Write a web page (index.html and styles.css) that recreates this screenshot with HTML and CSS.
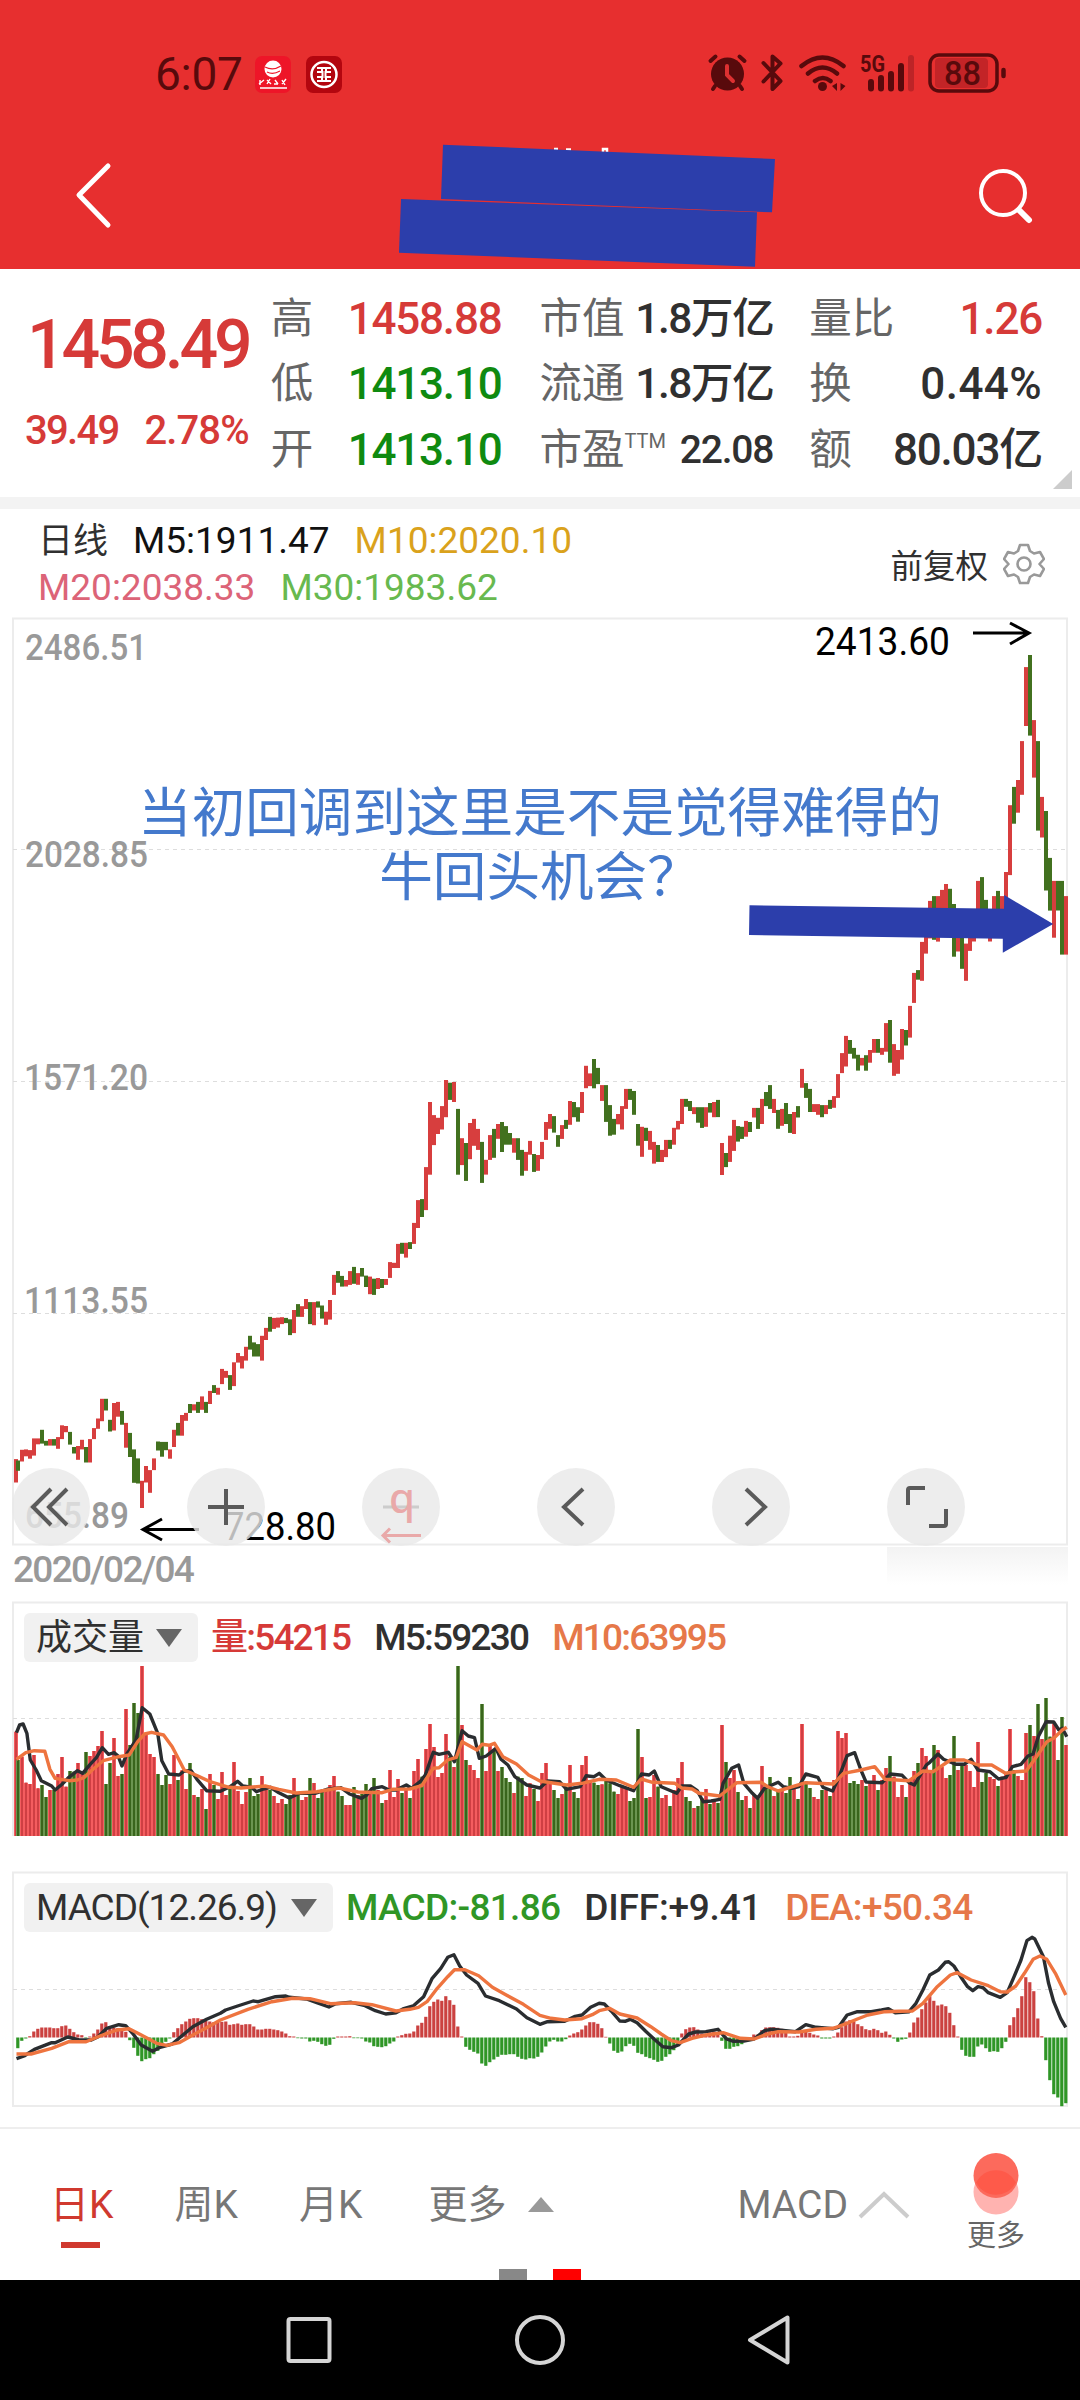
FILE: index.html
```html
<!DOCTYPE html>
<html lang="zh-CN">
<head>
    <meta charset="UTF-8">
    <meta name="viewport" content="width=device-width, initial-scale=1.0">
    <title>日K</title>
    <link rel="stylesheet" href="styles.css">
</head>
<body>
    <header class="header">
        <div class="status-bar">
            <div class="status-left">
                <span class="clock">6:07</span>
                <svg class="app-icon" width="36" height="37" viewBox="0 0 36 37">
                    <rect width="36" height="37" rx="7" fill="#ee1528"/>
                    <circle cx="18" cy="13" r="8.5" fill="#fff"/>
                    <path d="M10 11q8 4 16-1M12 16q6 3 13-1" stroke="#ee1528" stroke-width="1.2" fill="none"/>
                    <path d="M4 28l5-4M5 24v5M12 24l4 4M15 23l-3 5M20 24l3 4M19 28h4M27 24l3 5M31 23l-4 5M5 32h27" stroke="#fff" stroke-width="1.4" fill="none"/>
                </svg>
                <svg class="app-icon" width="36" height="37" viewBox="0 0 36 37">
                    <rect width="36" height="37" rx="7" fill="#b3060f"/>
                    <circle cx="18" cy="18.500" r="12.500" fill="none" stroke="#fff" stroke-width="2.500"/>
                    <path d="M11 12h14M11 25h14M11 16h5.500v5H11M25 16h-5.500v5H25M16 12v4M20 12v4M16 21v4M20 21v4" fill="none" stroke="#fff" stroke-width="2"/>
                </svg>
            </div>
            <svg class="status-right" width="310" height="44" viewBox="700 50 310 44">
                <g fill="#580a0c" stroke="#580a0c" stroke-linecap="round">
                    <circle cx="727.500" cy="74" r="16.500" stroke="none"/>
                    <path d="M710.500 61l5-4.500M744.500 61l-5-4.500M715 86l-2 3M740 86l2 3" stroke-width="4"/>
                    <path d="M727 66v9l6 6" stroke="#dd3031" stroke-width="4" fill="none"/>
                    <path d="M763.500 63l17 18-8 8V56.500l8 7-17 18" stroke-width="4" stroke-linejoin="round" fill="none"/>
                    <path d="M801.500 66q21-17 42 0M808 73.500q14.500-12 29 0M815 81q8-6 15.500 0" stroke-width="4.500" fill="none"/>
                    <circle cx="822.500" cy="86.500" r="4.500" stroke="none"/>
                    <path d="M837 83v8l-5-5zM840.500 83v8l5-5z" stroke="none"/>
                    <path d="M871 82v6.500M881 78v10.500M891 74v14.500M901 66v22.500" stroke-width="6"/>
                    <path d="M911 58v30.500" stroke-width="6" stroke="#bd2427"/>
                    <rect x="930" y="55" width="67" height="36" rx="9" fill="none" stroke-width="3.500"/>
                    <rect x="935" y="58" width="53" height="30" rx="4" fill="#c32427" stroke="none"/>
                    <path d="M1003.500 70v6" stroke-width="4.500"/>
                </g>
                <text class="network" x="860" y="72" textLength="25" lengthAdjust="spacingAndGlyphs">5G</text>
                <text class="battery" x="944" y="84.500" textLength="37" lengthAdjust="spacingAndGlyphs">88</text>
            </svg>
        </div>
        <div class="title-bar">
            <svg width="40" height="70" viewBox="0 0 40 70">
                <path d="M35 6L6 35l29 30" fill="none" stroke="#fff" stroke-width="5" stroke-linecap="round" stroke-linejoin="round"/>
            </svg>
            <svg width="60" height="60" viewBox="0 0 60 60">
                <circle cx="27" cy="28" r="22" fill="none" stroke="#fff" stroke-width="4"/>
                <path d="M43 45l10 10" stroke="#fff" stroke-width="6" stroke-linecap="round"/>
            </svg>
        </div>
        <svg class="title-cover" width="380" height="126" viewBox="397 142 380 126">
            <path d="M554 149h4M566 149.500h5M603 152v-3h4v3" stroke="#fff" stroke-width="2.500" fill="none"/>
            <path d="M443 144.700l332 14.300-3 53.300-331-13.300z" fill="#2c3eab"/>
            <path d="M401 199l356 13.300-2 54.400-356-14z" fill="#2c3eab"/>
        </svg>
    </header>

    <section class="quote">
        <div class="quote-main up">
            <div class="price">1458.49</div>
            <div class="change"><span>39.49</span><span class="pct">2.78%</span></div>
        </div>
        <div class="quote-col">
            <div><label>高</label><b class="up">1458.88</b></div>
            <div><label>低</label><b class="down">1413.10</b></div>
            <div><label>开</label><b class="down">1413.10</b></div>
        </div>
        <div class="quote-col">
            <div><label>市值</label><b class="cap">1.8万亿</b></div>
            <div><label>流通</label><b class="cap">1.8万亿</b></div>
            <div><label>市盈<sup>TTM</sup></label><b class="small">22.08</b></div>
        </div>
        <div class="quote-col">
            <div><label>量比</label><b class="up">1.26</b></div>
            <div><label>换</label><b class="wide">0.44%</b></div>
            <div><label>额</label><b>80.03亿</b></div>
        </div>
        <i class="expand"></i>
    </section>

    <section class="chart-head">
        <div class="ma-list">
            <div><span class="day">日线</span><span class="m5">M5:1911.47</span><span class="m10">M10:2020.10</span></div>
            <div><span class="m20">M20:2038.33</span><span class="m30">M30:1983.62</span></div>
        </div>
        <div class="adjust">
            <span>前复权</span>
            <svg width="42" height="42" viewBox="0 0 42 42" fill="none" stroke="#999" stroke-width="2.600" stroke-linejoin="round">
                <path d="M17 2h8l2 6 4 2.500 6-1.500 4 7-4.500 5 4.500 5-4 7-6-1.500-4 2.500-2 6h-8l-2-6-4-2.500-6 1.500-4-7 4.500-5-4.500-5 4-7 6 1.500 4-2.500z"/>
                <circle cx="21" cy="21" r="6.500"/>
            </svg>
        </div>
    </section>

    <section class="price-panel">
        <svg width="1080" height="930" viewBox="0 617 1080 930">
            <rect class="frame" x="13" y="618.500" width="1054" height="926"/>
            <path class="grid" d="M13 849.500H1067M13 1081.500H1067M13 1313.500H1067"/>
            <g class="scale">
                <text x="25" y="660" textLength="122" lengthAdjust="spacingAndGlyphs">2486.51</text>
                <text x="25" y="867" textLength="123" lengthAdjust="spacingAndGlyphs">2028.85</text>
                <text x="24" y="1090" textLength="124" lengthAdjust="spacingAndGlyphs">1571.20</text>
                <text x="24" y="1313" textLength="124" lengthAdjust="spacingAndGlyphs">1113.55</text>
                <text x="25" y="1527.500" textLength="104" lengthAdjust="spacingAndGlyphs">655.89</text>
            </g>
            <g id="candles"></g>
            <g class="extreme">
                <text x="815" y="655" textLength="135" lengthAdjust="spacingAndGlyphs">2413.60</text>
                <path d="M973 633h56M1010 623l19 10-19 11"/>
                <text x="224" y="1540" textLength="112" lengthAdjust="spacingAndGlyphs">728.80</text>
                <path d="M199 1529.500h-56M162 1519l-19 10.500 19 10.500"/>
            </g>
        </svg>
        <p class="note">当初回调到这里是不是觉得难得的<br>牛回头机会？</p>
        <svg class="note-arrow" width="306" height="60" viewBox="748 894 306 60">
            <path d="M749.500 905.300l254.500 3.400.2-13.700 49 29-50.400 28.700v-14L749 935z" fill="#2c3eab"/>
        </svg>
        <div class="tools">
            <button><svg viewBox="-39 -39 78 78"><path d="M0-18l-18 18L0 18M16-18L-2 0l18 18"/></svg></button>
            <button><svg viewBox="-39 -39 78 78"><path d="M-18 0h36M0-18v36"/></svg></button>
            <button class="q-tool"><svg viewBox="-39 -39 78 78"><path class="faint" d="M-18 0h36"/><text x="-12" y="6">q</text><path d="M20 28.500h-38M-11 21.500l-7 7 7 7"/></svg></button>
            <button><svg viewBox="-39 -39 78 78"><path d="M7-18l-19 18L7 18"/></svg></button>
            <button><svg viewBox="-39 -39 78 78"><path d="M-5-18l19 18-19 18"/></svg></button>
            <button><svg viewBox="-39 -39 78 78"><path d="M-18-2v-15q0-2 2-2H-1M20 2v15q0 2-2 2H3"/></svg></button>
        </div>
    </section>
    <div class="date-row"><span>2020/02/04</span><i></i></div>

    <section class="sub-panel volume">
        <div class="legend">
            <span class="pill pill-cn">成交量<i></i></span>
            <span class="l-vol">量:54215</span>
            <span class="l-m5">M5:59230</span>
            <span class="l-m10">M10:63995</span>
        </div>
        <svg width="1080" height="236" viewBox="0 1601 1080 236">
            <path class="frame" d="M13 1836V1602.500H1067V1836"/>
            <path class="grid" d="M13 1718.500H1067"/>
            <g id="volume"></g>
            <polyline id="vol5" class="line dark"/>
            <polyline id="vol10" class="line orange"/>
        </svg>
    </section>

    <section class="sub-panel macd">
        <div class="legend">
            <span class="pill pill-en"><em>MACD(12.26.9)</em><i></i></span>
            <span class="l-macd">MACD:-81.86</span>
            <span class="l-diff">DIFF:+9.41</span>
            <span class="l-dea">DEA:+50.34</span>
        </div>
        <svg width="1080" height="236" viewBox="0 1871 1080 236">
            <rect class="frame" x="13" y="1872.500" width="1054" height="233.500"/>
            <path class="grid" d="M13 1989.500H1067"/>
            <g id="macd"></g>
            <polyline id="diff" class="line dark"/>
            <polyline id="dea" class="line orange"/>
        </svg>
    </section>

    <nav class="tabs">
        <a class="active">日K</a>
        <a>周K</a>
        <a>月K</a>
        <a class="more">更多<i></i></a>
        <a class="indicator">MACD<svg width="52" height="30" viewBox="0 0 52 30"><path d="M2 27L26 4l24 23" fill="none" stroke="#ccc" stroke-width="4"/></svg></a>
        <a class="more-dot">
            <svg width="46" height="62" viewBox="0 0 46 62">
                <circle cx="23" cy="39" r="22.500" fill="#ffb3b0"/>
                <circle cx="23" cy="22.500" r="22.500" fill="#fc6a5c"/>
                <path d="M3 29.500a22.500 22.500 0 0 1 40 0 22.500 22.500 0 0 1-40 0" fill="#fe5a4a"/>
            </svg>
            更多
        </a>
        <div class="pager"><i></i><i></i></div>
    </nav>

    <footer class="nav-bar">
        <svg width="1080" height="120" viewBox="0 2280 1080 120" fill="none" stroke="#d5d5d5" stroke-width="4" stroke-linejoin="round">
            <rect x="288.500" y="2319" width="41" height="42" rx="2"/>
            <circle cx="540" cy="2340" r="23"/>
            <path d="M750 2340l37.500-22.500v45z"/>
        </svg>
    </footer>

    <script src="chart.js"></script>
</body>
</html>
```
FILE: styles.css
```css
* {
    box-sizing: border-box;
}
body {
    margin: 0;
    width: 1080px;
    height: 2400px;
    overflow: hidden;
    background: #fff;
    color: #303030;
    font-family: Roboto, "Noto Sans CJK SC", sans-serif;
}
svg {
    display: block;
}
i {
    font-style: normal;
}
.up {
    color: #d63a38;
}
.down {
    color: #0f8a10;
}

/* header */
.header {
    position: relative;
    height: 269px;
    background: #e72f2f;
}
.status-bar {
    display: flex;
    justify-content: space-between;
    padding: 50px 70px 0 155px;
}
.status-left {
    display: flex;
    height: 48px;
    align-items: center;
}
.clock {
    width: 100px;
    font-size: 46px;
    letter-spacing: -0.3px;
    color: #580a0c;
}
.app-icon {
    margin-right: 15px;
}
.network {
    font-size: 23px;
    font-weight: 700;
    fill: #580a0c;
}
.battery {
    font-size: 34px;
    font-weight: 500;
    fill: #580a0c;
}
.title-bar {
    display: flex;
    justify-content: space-between;
    align-items: center;
    padding: 62px 44px 0 73px;
}
.title-cover {
    position: absolute;
    left: 397px;
    top: 142px;
}

/* quote */
.quote {
    position: relative;
    display: flex;
    height: 228px;
    padding: 17px 38px 0 25px;
}
.quote-main {
    width: 224px;
    margin-right: 22px;
    font-weight: 500;
}
.price {
    margin: 23px 0 0 2px;
    font-size: 68px;
    line-height: 72px;
    letter-spacing: -4.2px;
}
.change {
    display: flex;
    justify-content: space-between;
    margin-top: 28px;
    font-size: 40px;
    line-height: 44px;
    letter-spacing: -1.7px;
}
.pct {
    letter-spacing: -0.9px;
}
.quote-col {
    width: 231px;
    margin-right: 38px;
}
.quote-col + .quote-col {
    width: 234px;
    margin-right: 36px;
}
.quote-col + .quote-col + .quote-col {
    width: 233px;
    margin-right: 0;
}
.quote-col div {
    display: flex;
    justify-content: space-between;
    align-items: center;
    height: 65.5px;
    white-space: nowrap;
}
.quote-col label {
    font-size: 42.500px;
    line-height: 60px;
    color: #666;
}
.quote-col sup {
    font-size: 20px;
    line-height: 1;
    vertical-align: 16px;
}
.quote-col b {
    font-size: 44px;
    line-height: 60px;
    font-weight: 500;
    letter-spacing: -1.2px;
}
.quote-col .cap {
    font-size: 42.500px;
    letter-spacing: -1.4px;
}
.quote-col .small {
    font-size: 39px;
}
.quote-col .wide {
    letter-spacing: 0.4px;
}
.expand {
    position: absolute;
    right: 8px;
    bottom: 8px;
    border-left: 19px solid transparent;
    border-bottom: 19px solid #ccc;
}

/* moving averages */
.chart-head {
    display: flex;
    justify-content: space-between;
    height: 120px;
    padding: 9px 35px 0 38px;
    border-top: 12px solid #f3f3f3;
}
.ma-list {
    font-size: 37px;
    line-height: 45.500px;
    letter-spacing: 0;
}
.ma-list span {
    margin-right: 25px;
}
.day {
    font-size: 35px;
}
.m5 {
    color: #111;
}
.m10 {
    color: #daa21c;
}
.m20 {
    color: #dc6478;
}
.m30 {
    color: #68b94f;
}
.adjust {
    display: flex;
    align-items: center;
    height: 91px;
    font-size: 32.500px;
}
.adjust svg {
    margin-left: 15px;
}

/* price chart */
.frame {
    fill: none;
    stroke: #ececec;
    stroke-width: 2;
}
.grid {
    stroke: #ddd;
    stroke-width: 1;
    stroke-dasharray: 4 4;
}
.price-panel {
    position: relative;
    height: 930px;
}
.scale {
    font-size: 37px;
    font-weight: 500;
    fill: #999;
}
.extreme {
    font-size: 38.500px;
    fill: #000;
}
.extreme path {
    fill: none;
    stroke: #000;
    stroke-width: 3;
}
.r {
    fill: #d73e3e;
}
.g {
    fill: #42711f;
}
.note {
    position: absolute;
    top: 160px;
    left: 0;
    width: 1080px;
    margin: 0;
    text-align: center;
    font-family: "Noto Sans CJK SC", sans-serif;
    font-size: 53.600px;
    line-height: 64px;
    color: #4479cc;
}
.note-arrow {
    position: absolute;
    left: 748px;
    top: 277px;
}
.tools {
    position: absolute;
    left: 12px;
    top: 851px;
    display: flex;
    gap: 97px;
}
.tools button {
    width: 78px;
    height: 78px;
    padding: 0;
    border: none;
    border-radius: 50%;
    background: rgba(232, 232, 232, 0.8);
}
.tools path {
    fill: none;
    stroke: #5a5a5a;
    stroke-width: 4;
}
.tools .q-tool path {
    stroke: #e9a9a9;
    stroke-width: 3;
}
.tools .q-tool .faint {
    stroke: #ccc;
}
.tools text {
    font: 500 42px "Noto Sans", sans-serif;
    fill: #e9a9a9;
}
.date-row {
    display: flex;
    justify-content: space-between;
    height: 54px;
    padding: 0 12px 0 13px;
    font-size: 37px;
    line-height: 46px;
    font-weight: 500;
    letter-spacing: -1.7px;
    color: #999;
}
.date-row i {
    width: 181px;
    height: 38px;
    background: linear-gradient(#f3f3f3, #fff);
}

/* volume and macd */
.sub-panel {
    position: relative;
    height: 236px;
}
.macd {
    margin-top: 34px;
}
.line {
    fill: none;
    stroke-width: 3.4;
    stroke-linejoin: round;
}
.dark {
    stroke: #2a2d30;
}
.orange {
    stroke: #ee743f;
}
.legend {
    position: absolute;
    left: 24px;
    top: 12px;
    display: flex;
    align-items: center;
    font-size: 37px;
    line-height: 49px;
    font-weight: 500;
    white-space: nowrap;
    letter-spacing: -0.7px;
}
.volume .legend {
    letter-spacing: -1.8px;
}
.pill {
    display: flex;
    align-items: center;
    justify-content: space-between;
    height: 49px;
    padding: 0 16px 0 12px;
    border-radius: 6px;
    background: #f1f1f1;
    font-weight: 400;
}
.pill em {
    font-style: normal;
    letter-spacing: -1px;
}
.pill i {
    border: 13px solid transparent;
    border-top: 18px solid #666;
    border-bottom: none;
}
.pill-cn {
    width: 174px;
    font-size: 36px;
    line-height: 44px;
    letter-spacing: 0;
}
.pill-en {
    width: 309px;
}
.legend span + span {
    margin-left: 24px;
}
.legend .pill + span {
    margin-left: 13px;
}
.l-vol {
    line-height: 44px;
    color: #d63a38;
}
.l-m10,
.l-dea {
    color: #e67849;
}
.l-macd {
    color: #2f9626;
}
.l-diff {
    letter-spacing: -0.2px;
}
.vr {
    fill: #f45d5f;
}
.vr2 {
    fill: #cf3f43;
}
.vg {
    fill: #6b9550;
}
.vg2 {
    fill: #39651c;
}
.mr {
    fill: #cb4140;
}
.mg {
    fill: #2f9626;
}

/* bottom */
.tabs {
    position: relative;
    display: flex;
    height: 153px;
    margin-top: 20px;
    padding-left: 50px;
    border-top: 2px solid #eee;
    font-size: 39px;
    line-height: 152px;
    color: #777;
}
.tabs a {
    margin-right: 61px;
    white-space: nowrap;
}
.tabs .active {
    position: relative;
    color: #d0392f;
}
.active::after {
    content: "";
    position: absolute;
    left: 11px;
    bottom: 32px;
    width: 39px;
    height: 6px;
    background: #d0392f;
}
.tabs .more {
    display: flex;
    align-items: center;
    margin-left: 5px;
}
.more i {
    margin-left: 22px;
    border: 13.500px solid transparent;
    border-bottom: 15px solid #999;
    border-top: none;
}
.tabs .indicator {
    display: flex;
    align-items: center;
    margin-left: auto;
    margin-right: 57px;
}
.indicator svg {
    margin-left: 10px;
}
.tabs .more-dot {
    display: flex;
    flex-direction: column;
    align-items: center;
    margin-right: 55px;
    padding-top: 24px;
    font-size: 29px;
    line-height: 42px;
    color: #666;
}
.pager {
    position: absolute;
    left: 499px;
    bottom: 0;
    display: flex;
    gap: 26px;
}
.pager i {
    width: 28px;
    height: 11px;
    background: #888;
}
.pager i + i {
    background: #f00;
}
.nav-bar {
    height: 120px;
    background: #000;
}
```
FILE: chart.js
```js
// colour + top,bottom of each bar, measured from y = 1050
const candles = `r1188,1256 g1192,1222 r1161,1195 r1160,1180 r1162,1187 r1128,1178 r1128,1145 g1103,1143 g1135,1149 r1130,1149
g1130,1149 r1124,1158 r1090,1130 r1092,1110 g1109,1146 g1153,1172 r1150,1190 r1132,1160 g1153,1198 r1130,1198
r1098,1130 r1070,1100 r1013,1078 g1013,1047 g1074,1108 r1025,1105 r1022,1065 g1048,1088 r1083,1155 g1112,1182
g1160,1257 g1186,1259 r1251,1330 r1208,1256 r1220,1286 r1186,1220 g1137,1163 g1138,1181 g1138,1162 r1160,1187
r1103,1153 g1083,1120 r1060,1120 r1054,1077 g1028,1054 r1029,1047 g1022,1054 r1006,1045 g1022,1054 r990,1028
g973,996 r981,1001 r926,970 r932,952 g944,987 r907,976 r880,908 r889,925 r862,902 g830,870
g849,890 g854,890 r830,902 r807,842 g775,818 r778,810 r777,806 r776,796 g778,793 g782,828
r755,822 g738,775 r744,775 r723,752 g732,796 r732,799 g730,748 g742,780 r760,798 r726,783
r653,711 g642,676 g656,687 r668,687 r642,682 g630,679 r648,682 g633,658 g655,688 r658,709
g664,711 r662,694 g665,691 r665,682 r616,662 r618,633 r563,633 g560,592 r560,603 g558,578
r502,563 r436,517 g433,485 r340,465 r151,362 r189,276 r197,244 r163,231 r87,195 g95,145
r93,151 g171,362 r256,334 g270,380 r212,317 r200,278 r229,290 g267,386 r319,362 r247,319
g229,313 r215,258 g209,296 g221,275 g241,275 r256,298 g256,319 g290,365 r296,351 r264,304
g302,354 r305,351 r267,317 r209,261 r186,229 g192,240 g247,281 r218,258 g203,229 r148,217
g151,195 g166,208 r122,183 r46,111 r68,105 g26,111 g52,99 r102,148 g102,209 g160,249
g200,246 r186,216 r163,231 r113,171 g113,145 g119,188 g215,278 r223,310 g226,264 r235,290
r267,330 g276,325 r290,325 r261,311 g261,287 r226,275 r206,231 r142,215 g142,165 g148,177
r166,186 g166,211 g166,226 r166,223 g154,182 r151,195 g145,195 r270,363 g299,340 r249,325
r203,293 g221,266 g223,258 r206,252 g209,238 r168,196 g168,229 r142,215 g122,163 g102,171
r142,183 g174,229 r171,220 g154,215 g186,241 r180,244 g163,196 r55,110 g96,139 g113,180
r157,180 r157,188 g160,195 r160,186 g145,171 r134,168 r70,139 r9,67 r-41,48 g-29,11
g-6,25 g14,60 r23,45 g15,60 r0,37 r-32,8 g-32,8 r-6,14 r-78,5 g-87,37
r-17,75 r0,69 r-61,28 g-58,-13 r-128,-36 r-224,-137 g-232,-204 r-314,-201 r-339,-280 r-433,-324
g-447,-320 r-447,-315 r-465,-387 r-482,-407 g-468,-368 g-424,-271 r-358,-286 g-339,-236 r-309,-201 r-339,-288
r-387,-315 r-491,-358 g-502,-358 g-436,-339 r-397,-315 r-447,-358 g-462,-378 r-447,-368 r-517,-397 r-711,-508
g-764,-657 r-784,-689 r-897,-741 r-1112,-941 g-1147,-913 r-958,-791 g-897,-637 r-735,-617 g-694,-463 g-558,-405
r-491,-326 g-491,-405 g-491,-277 r-447,-277`.split(/\s+/);

// tops of the volume bars, same order as the candles
const volumes = [
    425, 510, 500, 578, 582, 495, 595, 585, 621, 600, 600, 552, 501, 590, 543, 545, 519, 548, 486, 498,
    483, 468, 423, 582, 519, 444, 558, 552, 357, 465, 339, 369, 228, 430, 492, 501, 552, 585, 555, 582,
    495, 570, 541, 597, 519, 615, 621, 597, 657, 552, 585, 627, 546, 615, 590, 516, 603, 642, 606, 564,
    618, 612, 558, 597, 600, 618, 639, 627, 642, 615, 564, 612, 630, 621, 564, 579, 624, 605, 597, 585,
    558, 605, 618, 645, 645, 591, 615, 612, 582, 600, 564, 600, 639, 630, 540, 621, 567, 609, 600, 624,
    543, 507, 560, 477, 402, 471, 561, 549, 432, 500, 531, 228, 405, 510, 525, 540, 564, 342, 543, 462,
    480, 543, 531, 564, 576, 609, 560, 564, 618, 580, 597, 633, 549, 519, 580, 600, 624, 612, 590, 525,
    606, 624, 525, 498, 570, 578, 585, 583, 570, 580, 605, 612, 590, 594, 633, 624, 417, 501, 624, 621,
    555, 590, 624, 615, 648, 600, 564, 516, 621, 633, 654, 648, 625, 597, 642, 630, 639, 405, 516, 564,
    540, 606, 630, 618, 654, 615, 625, 528, 590, 561, 618, 600, 598, 609, 561, 597, 627, 402, 575, 594,
    621, 627, 600, 600, 618, 570, 423, 444, 429, 579, 573, 582, 570, 588, 579, 555, 600, 570, 534, 498,
    560, 621, 585, 621, 570, 543, 519, 474, 498, 540, 465, 480, 530, 564, 555, 438, 540, 520, 525, 543,
    591, 456, 576, 549, 561, 567, 588, 560, 550, 417, 540, 558, 570, 429, 405, 438, 342, 447, 324, 440,
    400, 510, 381, 465
];

const macd = [
    -32, -10, -3, 4, 18, 26, 30, 30, 30, 28, 28, 34, 36, 26, 16, 9, 7, -2, 3, 12, 24, 42, 46, 34, 30, 28, 24, 17, -8, -31,
    -55, -71, -65, -62, -50, -40, -25, -13, -3, 16, 28, 40, 48, 56, 58, 58, 55, 50, 48, 46, 48, 47, 48, 38, 40, 42, 38, 40, 40, 33,
    24, 24, 26, 26, 24, 22, 18, 12, 4, 3, -2, -3, -3, -12, -10, -13, -20, -25, -22, -4, 3, 3, 3, 4, -2, -2, -3, -12, -15, -26,
    -28, -29, -26, -18, -12, 3, 7, 11, 12, 18, 36, 44, 62, 94, 107, 114, 110, 124, 112, 98, 33, 3, -28, -37, -43, -48, -78, -85, -74, -66,
    -58, -52, -52, -50, -50, -58, -64, -66, -62, -63, -58, -45, -27, -12, -7, -12, -12, -5, 6, 12, 16, 24, 36, 46, 46, 41, 28, 2, -18, -40,
    -46, -42, -26, -19, -25, -46, -50, -58, -62, -67, -73, -70, -58, -50, -38, -20, 12, 25, 30, 31, 24, 12, 10, 16, 18, 10, -10, -34, -34, -28,
    -26, -20, -8, -3, 9, 9, 22, 30, 31, 31, 29, 26, 15, 3, 3, 5, 15, 18, 14, 9, 6, -3, -3, -3, 3, 15, 31, 48, 52, 48,
    40, 34, 25, 22, 26, 22, 14, 18, 8, -3, -13, -6, -4, 15, 45, 60, 85, 105, 124, 110, 96, 99, 94, 74, 37, 3, -37, -55, -58, -58,
    -27, -21, -32, -43, -41, -43, -32, -13, 37, 61, 88, 124, 181, 166, 139, 57, 4, -68, -128, -170, -180, -206, -197
];

const lines = {
    vol5: '48,428 57,405 67,402 78,430 88,510 105,540 120,572 150,588 160,600 180,583 200,562 225,542 240,550 262,523 280,503 297,473 315,493 332,488 343,498 354,528 368,493 395,450 413,353 435,372 458,430 470,512 490,552 520,555 535,543 555,542 572,568 600,602 640,604 665,592 690,574 705,588 730,592 745,605 765,597 785,592 810,608 840,624 870,610 915,610 950,598 990,593 1015,612 1050,625 1065,615 1080,596 1110,590 1130,600 1150,600 1180,585 1195,595 1220,575 1235,555 1258,487 1275,493 1302,487 1320,515 1342,422 1360,438 1378,443 1392,505 1412,498 1440,475 1455,508 1475,525 1495,560 1530,585 1568,594 1590,573 1625,575 1645,598 1685,590 1702,557 1725,560 1740,550 1760,570 1800,587 1840,602 1863,552 1885,555 1900,543 1920,590 1965,610 1980,588 2005,588 2025,602 2042,635 2065,633 2090,628 2100,580 2125,535 2145,525 2160,580 2185,610 2200,625 2220,595 2260,577 2275,590 2300,595 2320,590 2340,552 2375,562 2390,592 2418,603 2435,565 2460,497 2482,488 2500,540 2515,576 2562,578 2585,552 2620,556 2640,578 2655,585 2670,560 2690,525 2700,517 2724,492 2740,508 2775,523 2800,523 2820,508 2840,540 2875,545 2900,567 2922,562 2940,530 2965,523 2985,498 3000,492 3015,440 3038,395 3060,396 3075,420 3085,415 3098,440',
    vol10: '48,508 75,488 100,482 130,484 145,538 160,565 200,572 225,570 245,562 270,538 300,512 345,500 375,495 400,455 420,432 440,427 475,435 500,470 520,510 535,540 575,558 610,575 665,592 700,594 770,588 810,598 860,609 920,605 985,594 1040,606 1110,608 1140,598 1190,597 1225,587 1258,535 1275,533 1300,510 1325,502 1342,455 1385,480 1400,463 1420,466 1436,460 1460,500 1500,522 1535,555 1568,573 1600,578 1645,585 1690,580 1740,568 1790,570 1840,592 1862,567 1895,577 1960,580 1980,594 2010,597 2030,610 2090,618 2140,578 2210,577 2230,590 2260,603 2340,578 2420,582 2450,550 2500,540 2540,530 2570,568 2640,572 2680,543 2710,545 2760,510 2800,510 2840,525 2880,525 2920,550 2950,545 2980,543 3010,500 3040,455 3060,445 3085,420 3098,412',
    diff: '48,596 70,588 100,568 150,548 160,548 197,531 230,540 265,540 285,530 310,505 345,494 365,497 385,520 410,555 443,574 465,562 500,552 560,500 600,478 640,460 655,450 690,438 735,423 750,425 800,410 830,408 840,412 890,417 920,428 955,441 975,431 1020,427 1060,437 1090,452 1120,462 1150,458 1170,447 1200,438 1230,410 1255,355 1280,325 1300,292 1318,284 1335,318 1355,345 1388,370 1410,408 1450,422 1500,447 1530,473 1568,493 1590,485 1640,484 1670,469 1690,465 1715,442 1740,430 1755,432 1775,453 1800,483 1815,484 1830,478 1850,488 1875,514 1900,538 1925,560 1950,563 1970,555 2000,522 2020,516 2050,515 2085,508 2110,537 2130,544 2160,543 2190,537 2220,512 2240,508 2310,515 2340,494 2370,502 2420,506 2435,502 2460,465 2490,455 2530,455 2560,450 2580,446 2600,458 2640,455 2660,430 2680,390 2700,345 2725,330 2745,307 2755,305 2770,318 2790,350 2810,380 2825,392 2840,380 2855,383 2870,398 2905,412 2925,398 2945,350 2965,300 2982,242 2997,232 3005,237 3030,290 3045,370 3060,425 3080,475 3095,502',
    dea: '48,582 90,582 150,565 200,545 250,545 290,528 340,510 375,506 420,530 455,550 485,556 520,548 560,525 600,503 640,480 720,448 790,425 850,415 900,416 960,431 1030,428 1080,434 1150,453 1190,448 1215,442 1240,425 1270,385 1300,350 1320,329 1350,329 1390,347 1430,382 1470,405 1520,433 1568,466 1600,475 1640,480 1690,476 1720,464 1740,452 1770,445 1800,462 1850,474 1890,500 1920,522 1950,542 1975,548 2010,535 2050,525 2100,518 2150,535 2190,537 2230,522 2260,515 2320,516 2370,508 2420,505 2460,490 2490,477 2520,465 2570,455 2610,454 2650,453 2680,430 2720,382 2760,345 2780,338 2820,360 2870,377 2905,395 2925,396 2950,378 2975,340 3000,298 3020,288 3040,298 3065,340 3095,405'
};

const SX = 2.904;
const STEP = 4;

function bar(cls, x, y, w, h) {
    return `<rect class="${cls}" x="${x.toFixed(1)}" y="${y.toFixed(1)}" width="${w}" height="${h.toFixed(1)}"/>`;
}

function barX(i) {
    // the first bar is cut off by the left edge
    return i === 0 ? 14 : 16 + STEP * (i - 1);
}

let html = '';
candles.forEach((c, i) => {
    const [top, bottom] = c.slice(1).split(',').map(v => 1050 + v / SX);
    html += bar(c[0], barX(i), top, 4, bottom - top);
});
document.getElementById('candles').innerHTML = html;

html = '';
volumes.forEach((v, i) => {
    const c = candles[i][0];
    const y = 1590 + v / 3;
    html += bar('v' + c, barX(i), y, 4, 1836 - y) + bar('v' + c + '2', barX(i) + 1, y, 2, 1836 - y);
});
document.getElementById('volume').innerHTML = html;

html = '';
macd.forEach((v, i) => {
    const h = Math.abs(v) / 3;
    html += bar(v > 0 ? 'mr' : 'mg', 16.2 + STEP * i, v > 0 ? 2037.5 - h : 2037.5, 3.2, h);
});
document.getElementById('macd').innerHTML = html;

function drawLine(id, base) {
    const pts = lines[id].split(' ').map(p => {
        const [x, y] = p.split(',');
        return (x / SX).toFixed(1) + ',' + (base + y / 3).toFixed(1);
    });
    document.getElementById(id).setAttribute('points', pts.join(' '));
}
drawLine('vol5', 1590);
drawLine('vol10', 1590);
drawLine('diff', 1860);
drawLine('dea', 1860);
```
